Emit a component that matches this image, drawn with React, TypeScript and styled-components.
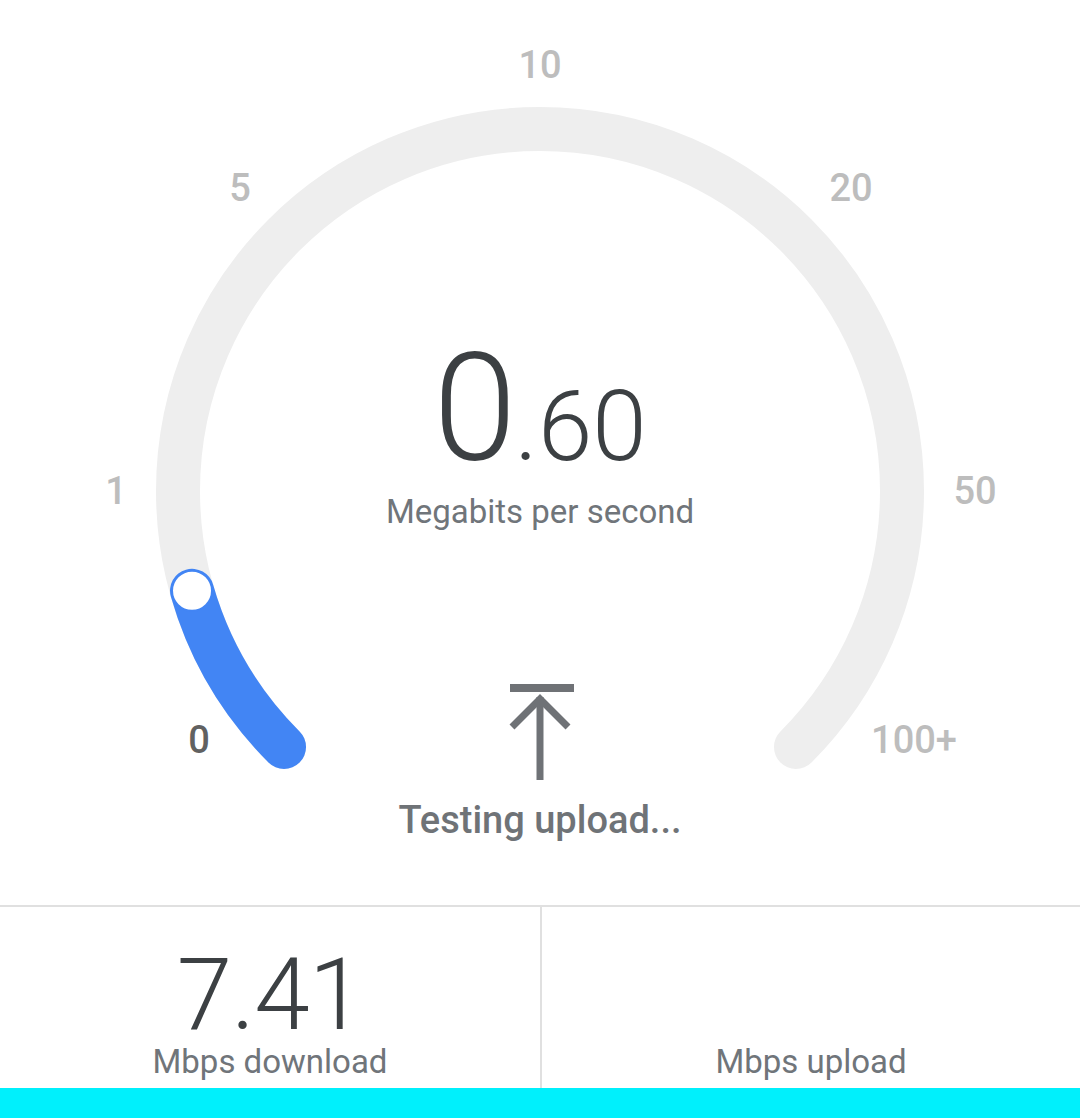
import * as React from "react";
import styled, { createGlobalStyle } from "styled-components";

const GlobalStyle = createGlobalStyle`
    html, body {
        margin: 0;
        padding: 0;
        background: #ffffff;
        overflow: hidden;
    }
    body {
        font-family: Roboto, "Noto Sans", Arial, sans-serif;
    }
`

const Page = styled.div`
    width: 1080px;
    height: 1118px;
    display: flex;
    flex-direction: column;
    background: #ffffff;
`

const GaugeArea = styled.div`
    height: 905px;
    display: grid;
    border-bottom: 2px solid #e0e0e0;
    & > * {
        grid-area: 1 / 1;
    }
`

const GaugeSvg = styled.svg`
    display: block;
    width: 1080px;
    height: 905px;
`

const Readout = styled.div`
    display: flex;
    flex-direction: column;
    align-items: center;
    padding-top: 334px;
`

const SpeedValue = styled.div`
    font-size: 150px;
    font-weight: 300;
    line-height: 1;
    color: #3c4043;
    letter-spacing: -2px;
`

const Fraction = styled.span`
    font-size: 98px;
    letter-spacing: 0;
`

const Unit = styled.div`
    margin-top: 11px;
    font-size: 33px;
    line-height: 1;
    color: #70757a;
`

const UploadIcon = styled.svg`
    display: block;
    margin-top: 152px;
    width: 70px;
    height: 100px;
`

const Status = styled.div`
    margin-top: 21px;
    font-size: 38px;
    font-weight: 500;
    line-height: 1;
    color: #6f7377;
`

const Stats = styled.div`
    height: 181px;
    display: grid;
    grid-template-columns: 1fr 1fr;
`

const StatCell = styled.div<{ divider?: boolean }>`
    display: flex;
    flex-direction: column;
    align-items: center;
    padding-top: 42px;
    border-left: ${(p) => (p.divider ? "2px solid #e0e0e0" : "none")};
`

const StatValue = styled.div`
    height: 92px;
    font-size: 100px;
    font-weight: 300;
    line-height: 92px;
    color: #3c4043;
    letter-spacing: -1px;
`

const StatLabel = styled.div`
    margin-top: 4px;
    font-size: 33px;
    line-height: 1;
    color: #70757a;
`

const Footer = styled.div`
    height: 30px;
    background: #00f0fc;
`

const CX = 540;
const CY = 491;
const R = 362;

const point = (deg: number) => {
    const rad = (deg * Math.PI) / 180;
    return [CX + R * Math.sin(rad), CY - R * Math.cos(rad)];
};

const ticks = [
    { label: "0", x: 199, y: 740, active: true },
    { label: "1", x: 116, y: 491 },
    { label: "5", x: 240, y: 188 },
    { label: "10", x: 540, y: 65 },
    { label: "20", x: 851, y: 188 },
    { label: "50", x: 975, y: 491 },
    { label: "100+", x: 914, y: 740 },
];

const Gauge = (props: { angle: number }) => {
    const [sx, sy] = point(-135);
    const [ex, ey] = point(135);
    const [kx, ky] = point(props.angle);

    return (
        <GaugeSvg viewBox="0 0 1080 905">
            <path
                d={`M${sx} ${sy} A${R} ${R} 0 1 1 ${ex} ${ey}`}
                fill="none"
                stroke="#eeeeee"
                strokeWidth={44}
                strokeLinecap="round"
            />
            <path
                d={`M${sx} ${sy} A${R} ${R} 0 0 1 ${kx} ${ky}`}
                fill="none"
                stroke="#4285f4"
                strokeWidth={44}
                strokeLinecap="round"
            />
            <circle cx={kx} cy={ky} r={20} fill="#ffffff" stroke="#4285f4" strokeWidth={2} />
            {ticks.map((t) => (
                <text
                    key={t.label}
                    x={t.x}
                    y={t.y}
                    textAnchor="middle"
                    dominantBaseline="central"
                    fontFamily="Roboto, Arial, sans-serif"
                    fontSize={38}
                    fontWeight={500}
                    fill={t.active ? "#616161" : "#bdbdbd"}
                >
                    {t.label}
                </text>
            ))}
        </GaugeSvg>
    );
};

const App = () => {
    return (
        <Page>
            <GlobalStyle />
            <GaugeArea>
                <Gauge angle={-106} />
                <Readout>
                    <SpeedValue>
                        0<Fraction>.60</Fraction>
                    </SpeedValue>
                    <Unit>Megabits per second</Unit>
                    <UploadIcon viewBox="0 0 70 100">
                        <rect x={5} y={4} width={64} height={8} fill="#6f7276" />
                        <path d="M35 17 V100" stroke="#6f7276" strokeWidth={7} fill="none" />
                        <path d="M7 47 L35 19 L63 47" stroke="#6f7276" strokeWidth={7} fill="none" />
                    </UploadIcon>
                    <Status>Testing upload...</Status>
                </Readout>
            </GaugeArea>
            <Stats>
                <StatCell>
                    <StatValue>7.41</StatValue>
                    <StatLabel>Mbps download</StatLabel>
                </StatCell>
                <StatCell divider>
                    <StatValue />
                    <StatLabel>Mbps upload</StatLabel>
                </StatCell>
            </Stats>
            <Footer />
        </Page>
    );
};

export default App;
